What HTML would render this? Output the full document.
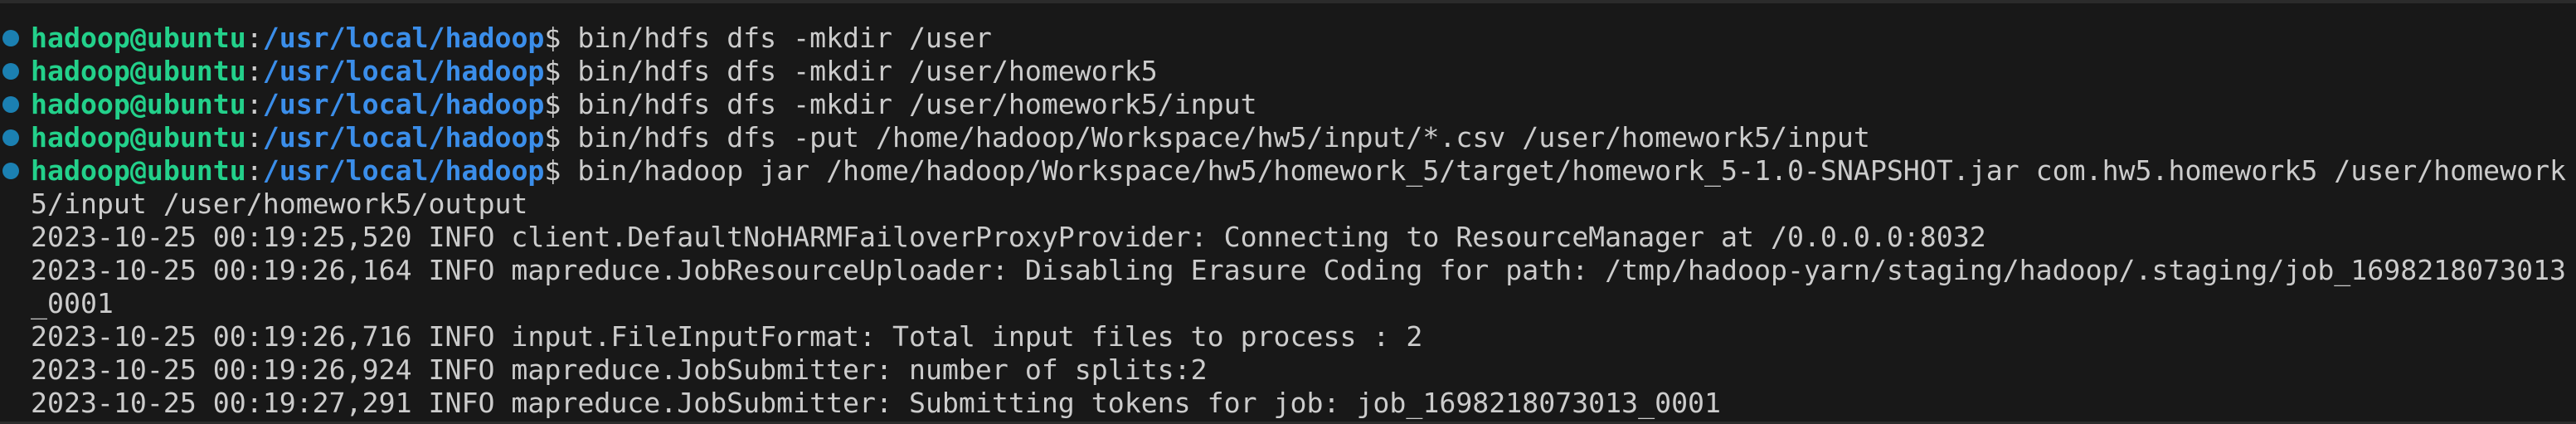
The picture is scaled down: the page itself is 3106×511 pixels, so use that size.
<!DOCTYPE html>
<html><head><meta charset="utf-8"><style>
html,body{margin:0;padding:0;width:3106px;height:511px;overflow:hidden;background:#181818;}
#top{position:absolute;left:0;top:0;width:3106px;height:4px;background:#2b2b2b;}
#bot{position:absolute;left:0;top:508px;width:3106px;height:3px;background:#2b2b2b;}
pre{position:absolute;left:37px;top:26px;margin:0;font-family:"DejaVu Sans Mono","Liberation Mono",monospace;font-size:33.2px;line-height:40px;color:#cccccc;white-space:pre;}
.g{color:#23d18b;font-weight:bold}
.b{color:#3b8eea;font-weight:bold}
.dot{position:absolute;left:3px;width:20px;height:20px;border-radius:50%;background:#1b80b2;}
</style></head><body>
<div id="top"></div><div id="bot"></div>
<div class="dot" style="top:36px"></div>
<div class="dot" style="top:76px"></div>
<div class="dot" style="top:116px"></div>
<div class="dot" style="top:156px"></div>
<div class="dot" style="top:196px"></div>
<pre><span class="g">hadoop@ubuntu</span>:<span class="b">/usr/local/hadoop</span>$ bin/hdfs dfs -mkdir /user
<span class="g">hadoop@ubuntu</span>:<span class="b">/usr/local/hadoop</span>$ bin/hdfs dfs -mkdir /user/homework5
<span class="g">hadoop@ubuntu</span>:<span class="b">/usr/local/hadoop</span>$ bin/hdfs dfs -mkdir /user/homework5/input
<span class="g">hadoop@ubuntu</span>:<span class="b">/usr/local/hadoop</span>$ bin/hdfs dfs -put /home/hadoop/Workspace/hw5/input/*.csv /user/homework5/input
<span class="g">hadoop@ubuntu</span>:<span class="b">/usr/local/hadoop</span>$ bin/hadoop jar /home/hadoop/Workspace/hw5/homework_5/target/homework_5-1.0-SNAPSHOT.jar com.hw5.homework5 /user/homework
5/input /user/homework5/output
2023-10-25 00:19:25,520 INFO client.DefaultNoHARMFailoverProxyProvider: Connecting to ResourceManager at /0.0.0.0:8032
2023-10-25 00:19:26,164 INFO mapreduce.JobResourceUploader: Disabling Erasure Coding for path: /tmp/hadoop-yarn/staging/hadoop/.staging/job_1698218073013
_0001
2023-10-25 00:19:26,716 INFO input.FileInputFormat: Total input files to process : 2
2023-10-25 00:19:26,924 INFO mapreduce.JobSubmitter: number of splits:2
2023-10-25 00:19:27,291 INFO mapreduce.JobSubmitter: Submitting tokens for job: job_1698218073013_0001</pre>
</body></html>
